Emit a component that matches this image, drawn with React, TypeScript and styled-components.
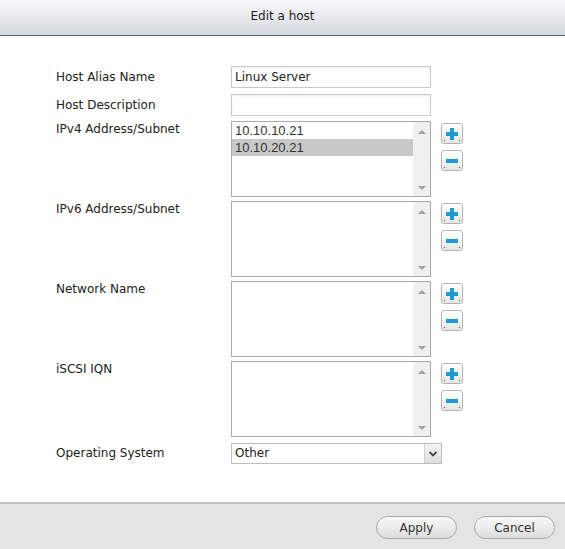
import React from "react";
import styled, { createGlobalStyle } from "styled-components";

const GlobalStyle = createGlobalStyle`
  html, body {
    margin: 0;
    padding: 0;
    background: #ffffff;
  }
  body {
    font-family: "DejaVu Sans", Verdana, sans-serif;
  }
`;

const Dialog = styled.div`
  width: 565px;
  height: 549px;
  display: flex;
  flex-direction: column;
  background: #ffffff;
  overflow: hidden;
`;

const Header = styled.div`
  height: 36px;
  flex-shrink: 0;
  display: flex;
  align-items: center;
  justify-content: center;
  background: linear-gradient(to bottom, #f7f8fa 0%, #e6e9ed 50%, #d3d8de 100%);
  border-bottom: 1px solid #5d646c;
  font-size: 12px;
  color: #1e1e1e;
  padding-bottom: 3px;
  box-sizing: border-box;
`;

const Body = styled.div`
  flex: 1;
  padding: 30px 0 0 56px;
`;

const Row = styled.div<{ gap: number }>`
  display: grid;
  grid-template-columns: 175px auto;
  margin-bottom: ${(p) => p.gap}px;
`;

const Label = styled.div<{ tall?: boolean }>`
  font-size: 12px;
  color: #222;
  line-height: ${(p) => (p.tall ? "16px" : "22px")};
`;

const Field = styled.div`
  display: flex;
  align-items: flex-start;
`;

const TextInput = styled.input`
  width: 200px;
  height: 22px;
  box-sizing: border-box;
  border: 1px solid #c9c9c9;
  box-shadow: inset 0 1px 2px rgba(0, 0, 0, 0.08);
  padding: 0 3px;
  margin: 0;
  font-family: "DejaVu Sans", Verdana, sans-serif;
  font-size: 12px;
  color: #222;
  outline: none;
`;

const ListBox = styled.div`
  width: 200px;
  height: 76px;
  box-sizing: border-box;
  border: 1px solid #a9a9a9;
  display: flex;
  background: #fff;
`;

const Items = styled.div`
  flex: 1;
`;

const Item = styled.div<{ selected?: boolean }>`
  height: 17px;
  line-height: 17px;
  padding-left: 3px;
  font-family: "Liberation Sans", Arial, sans-serif;
  font-size: 13px;
  color: #333;
  background: ${(p) => (p.selected ? "#c8c8c8" : "transparent")};
`;

const ScrollBar = styled.div`
  width: 17px;
  background: #f0f0f0;
  display: flex;
  flex-direction: column;
  justify-content: space-between;
  align-items: center;
  padding: 8px 0 6px;
  box-sizing: border-box;
`;

const Arrow = styled.div<{ down?: boolean }>`
  width: 0;
  height: 0;
  border-left: 4px solid transparent;
  border-right: 4px solid transparent;
  ${(p) =>
    p.down
      ? "border-top: 4px solid #a3a3a3;"
      : "border-bottom: 4px solid #a3a3a3;"}
`;

const Buttons = styled.div`
  display: flex;
  flex-direction: column;
  gap: 6px;
  margin: 2px 0 0 10px;
`;

const IconButton = styled.button`
  width: 22px;
  height: 21px;
  padding: 0;
  box-sizing: border-box;
  border: 1px solid #b4b4b4;
  border-radius: 3px;
  background: linear-gradient(to bottom, #ffffff 0%, #f2f2f2 60%, #e4e4e4 100%);
  display: flex;
  align-items: center;
  justify-content: center;
  position: relative;
  cursor: pointer;
  &::before,
  &::after {
    content: "";
    position: absolute;
    bottom: 2px;
    width: 1px;
    height: 1px;
    background: #555;
  }
  &::before {
    left: 2px;
  }
  &::after {
    right: 2px;
  }
`;

const Select = styled.div`
  width: 211px;
  height: 21px;
  box-sizing: border-box;
  border: 1px solid #bdbdbd;
  display: flex;
  align-items: stretch;
  background: #fff;
`;

const SelectText = styled.div`
  flex: 1;
  padding-left: 3px;
  line-height: 19px;
  font-size: 12px;
  color: #222;
`;

const SelectButton = styled.div`
  width: 16px;
  border-left: 1px solid #d0d0d0;
  background: linear-gradient(to bottom, #f4f4f4, #dedede);
  display: flex;
  align-items: center;
  justify-content: center;
`;

const Footer = styled.div`
  height: 47px;
  flex-shrink: 0;
  box-sizing: border-box;
  border-top: 2px solid #c4c4c4;
  background: #e4e4e4;
  display: flex;
  justify-content: flex-end;
  align-items: flex-start;
  padding: 12px 10px 0 0;
  gap: 17px;
`;

const PillButton = styled.button`
  width: 81px;
  height: 23px;
  border: 1px solid #a9a9a9;
  border-radius: 12px;
  background: linear-gradient(to bottom, #f7f7f7 0%, #ececec 50%, #dcdcdc 100%);
  font-family: "DejaVu Sans", Verdana, sans-serif;
  font-size: 12px;
  color: #333;
  padding: 0;
  cursor: pointer;
`;

const Plus = () => (
  <svg width="12" height="12" viewBox="0 0 12 12">
    <rect x="4" y="0" width="4" height="12" fill="#1b9ad6" />
    <rect x="0" y="4" width="12" height="4" fill="#1b9ad6" />
  </svg>
);

const Minus = () => (
  <svg width="12" height="12" viewBox="0 0 12 12">
    <rect x="0" y="4" width="12" height="4" fill="#1b9ad6" />
  </svg>
);

const Chevron = () => (
  <svg width="8" height="6" viewBox="0 0 8 6">
    <path d="M0.5 1 L4 4.5 L7.5 1" stroke="#444" strokeWidth="1.8" fill="none" />
  </svg>
);

type ListRowProps = {
  label: string;
  items?: string[];
  selected?: number;
  gap?: number;
};

const ListRow: React.FC<ListRowProps> = ({
  label,
  items = [],
  selected,
  gap = 4,
}) => (
  <Row gap={gap}>
    <Label tall>{label}</Label>
    <Field>
      <ListBox>
        <Items>
          {items.map((it, i) => (
            <Item key={it} selected={i === selected}>
              {it}
            </Item>
          ))}
        </Items>
        <ScrollBar>
          <Arrow />
          <Arrow down />
        </ScrollBar>
      </ListBox>
      <Buttons>
        <IconButton type="button">
          <Plus />
        </IconButton>
        <IconButton type="button">
          <Minus />
        </IconButton>
      </Buttons>
    </Field>
  </Row>
);

const App: React.FC = () => {
  return (
    <Dialog>
      <GlobalStyle />
      <Header>Edit a host</Header>
      <Body>
        <Row gap={6}>
          <Label>Host Alias Name</Label>
          <Field>
            <TextInput defaultValue="Linux Server" />
          </Field>
        </Row>
        <Row gap={5}>
          <Label>Host Description</Label>
          <Field>
            <TextInput defaultValue="" />
          </Field>
        </Row>
        <ListRow
          label="IPv4 Address/Subnet"
          items={["10.10.10.21", "10.10.20.21"]}
          selected={1}
        />
        <ListRow label="IPv6 Address/Subnet" />
        <ListRow label="Network Name" />
        <ListRow label="iSCSI IQN" gap={6} />
        <Row gap={0}>
          <Label style={{ lineHeight: "21px" }}>Operating System</Label>
          <Field>
            <Select>
              <SelectText>Other</SelectText>
              <SelectButton>
                <Chevron />
              </SelectButton>
            </Select>
          </Field>
        </Row>
      </Body>
      <Footer>
        <PillButton type="button">Apply</PillButton>
        <PillButton type="button">Cancel</PillButton>
      </Footer>
    </Dialog>
  );
};

export default App;
